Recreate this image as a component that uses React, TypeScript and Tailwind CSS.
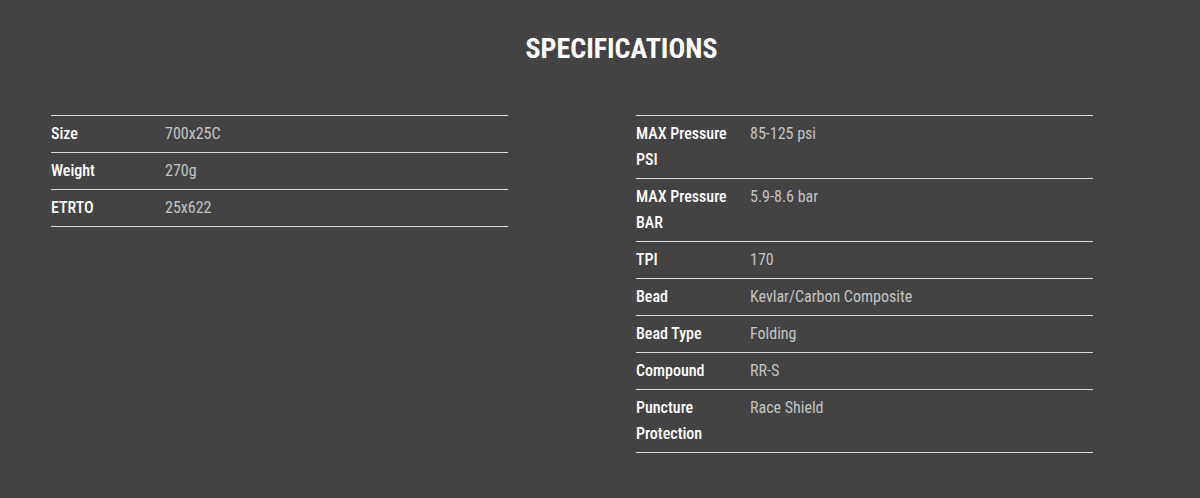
const LEFT: [string, string][] = [
  ["Size", "700x25C"],
  ["Weight", "270g"],
  ["ETRTO", "25x622"],
];

const RIGHT: [string, string][] = [
  ["MAX Pressure PSI", "85-125 psi"],
  ["MAX Pressure BAR", "5.9-8.6 bar"],
  ["TPI", "170"],
  ["Bead", "Kevlar/Carbon Composite"],
  ["Bead Type", "Folding"],
  ["Compound", "RR-S"],
  ["Puncture Protection", "Race Shield"],
];

function SpecTable({ rows }: { rows: [string, string][] }) {
  return (
    <table className="w-[457px] border-t border-[#dcdcdc] text-[16px] leading-[26px]">
      <tbody>
        {rows.map(([label, value]) => (
          <tr key={label} className="border-b border-[#dcdcdc] align-top">
            <td className="w-[114px] py-[5px] pr-2 font-medium text-white">{label}</td>
            <td className="py-[5px] text-[#c4c4c4]">{value}</td>
          </tr>
        ))}
      </tbody>
    </table>
  );
}

export default function App() {
  return (
    <div
      className="min-h-[498px] w-full bg-[#434343] pt-[31px]"
      style={{ fontFamily: '"Roboto Condensed", "Liberation Sans Narrow", Roboto, sans-serif' }}
    >
      <h2 className="pl-[43px] text-center text-[28px] font-bold leading-[36px] text-white">SPECIFICATIONS</h2>
      <div className="mt-[48px] flex items-start gap-[128px] pl-[51px]">
        <SpecTable rows={LEFT} />
        <SpecTable rows={RIGHT} />
      </div>
    </div>
  );
}
